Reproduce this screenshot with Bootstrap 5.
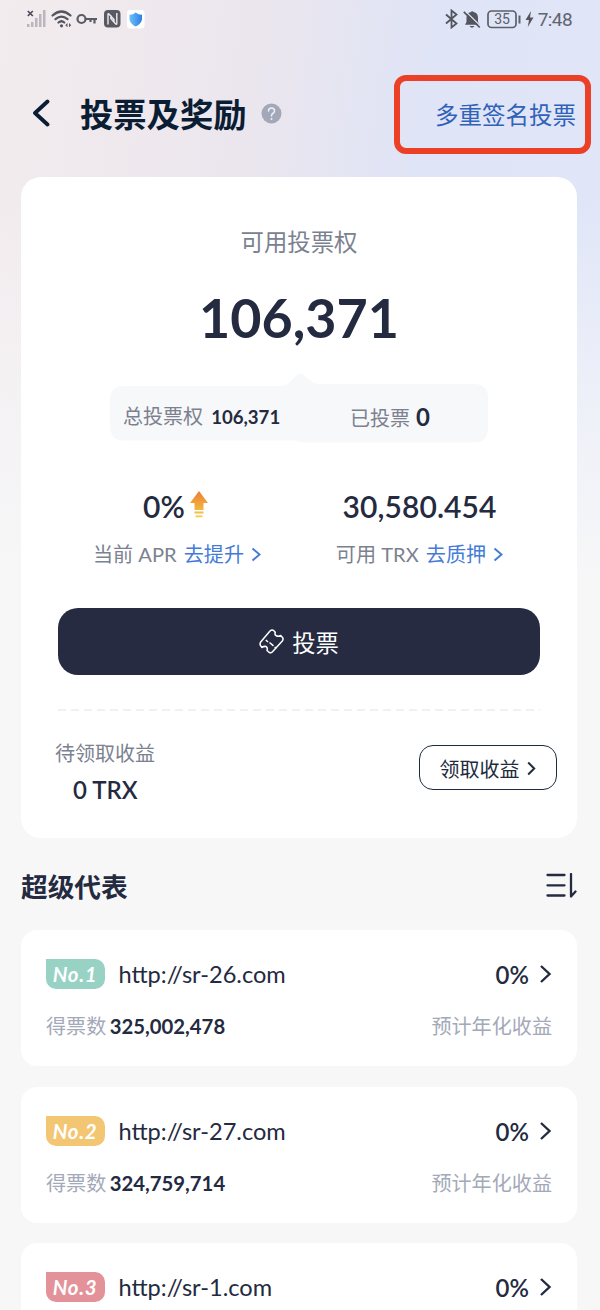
<!DOCTYPE html>
<html lang="zh-CN">
<head>
<meta charset="utf-8">
<meta name="viewport" content="width=device-width, initial-scale=1">
<title>投票及奖励</title>
<link href="https://cdn.jsdelivr.net/npm/bootstrap@5.3.0/dist/css/bootstrap.min.css" rel="stylesheet">
<style>
:root { --ink:#242a40; --muted:#7b8190; --pale:#a3a9b8; --blue:#447bd9; }
body { font-family:Lato,"Noto Sans CJK SC",sans-serif; color:var(--ink); background:#f7f7f8; height:1310px; overflow:hidden; }
.screen { height:1310px; overflow:hidden; padding:0 23px 0 21px;
  background:
    linear-gradient(180deg, rgba(247,247,248,0) 0, rgba(247,247,248,0) 200px, rgba(247,247,248,.55) 380px, #f7f7f8 580px),
    linear-gradient(98deg, #f3ecee 0, #ebe6ee 34%, #dfe4f6 56%, #e1e7fa 100%); }
svg { display:block; flex:none; }
.status { height:38px; margin:0 -23px 0 -21px; padding:0 28px 0 27px; color:#5d5d68; }
.clock { font:19px/38px Roboto,sans-serif; letter-spacing:-.6px; font-weight:400; color:#62646e; padding-top:1px; }
.topbar { height:139px; margin-right:-14px; padding:36.5px 0 0 11px; }
.title { font-size:33.3px; line-height:40px; font-weight:700; color:#0b1d33; margin:2px 0 0 30px; }
.multisig { width:197px; height:79px; border:6px solid #eb4026; border-radius:12px; color:#2f62b8; font-size:23.5px; line-height:69px; padding-right:9px; }
.panel { border:0; border-radius:20px; background:#fff; }
.wallet { height:661px; padding:47px 37px 0; }
.caption { font-size:23.4px; line-height:37px; height:36px; color:var(--muted); }
.power { font-size:53.8px; line-height:70px; font-weight:700; margin-top:22px; }
.split { height:70px; margin:21px 52px 0; padding-top:11px; }
.split svg { position:absolute; left:0; top:0; }
.split > div { position:relative; font-size:20px; line-height:65px; color:var(--muted); }
.split b { color:var(--ink); font-size:18.6px; }
.split .cast { font-size:24px; margin-left:1px; }
.figure-line { font-size:30px; line-height:40px; font-weight:600; height:40px; letter-spacing:.1px; }
.hint { font-size:20.1px; line-height:34px; height:32px; color:var(--muted); margin-top:12px; }
.hint a { color:var(--blue); text-decoration:none; margin-left:2px; }
.vote { height:67px; border-radius:20px; background:#262b41; color:#fff; font-size:23.3px; margin-top:38px; padding:0; border:0; }
.vote:hover { background:#262b41; color:#fff; }
.vote span { padding-top:3px; }
.dash { height:2px; margin-top:34px; background:repeating-linear-gradient(90deg,#f1f1f3 0 8px,transparent 8px 13px); }
.claim { margin:26px -17px 0 -3px; }
.claim-label { font-size:20px; line-height:32px; color:var(--muted); }
.claim-sum { font-size:24px; line-height:32px; font-weight:600; margin-top:5px; padding-left:18px; }
.claim-btn { width:138px; height:45px; margin-top:8px; border:1.3px solid #1d2b40; border-radius:14px; color:#222a3d; font-size:20px; padding:2px 1px 0 0; }
.section { height:92px; padding-top:4px; }
.section h2 { font-size:26.7px; font-weight:700; margin:2px 0 0; }
.rep { height:136px; margin-bottom:20.5px; padding:26px 25px 0; border-radius:16px; }
.rank { width:59px; height:30px; border-radius:0 10px 10px 10px; color:#fff; font-size:20.5px; letter-spacing:.6px; font-style:italic; font-weight:700; line-height:31px; text-align:center; padding-right:1px; }
.site { font-size:23.6px; line-height:37px; height:36px; margin-left:13.5px; }
.rate { font-size:24px; line-height:37px; height:36px; font-weight:600; margin-right:10px; }
.votes { font-size:20.1px; line-height:30px; margin-top:19px; color:var(--pale); }
.votes b { color:var(--ink); margin-left:3.5px; font-size:20.3px; }
.no1 { background:#98d2c4; } .no2 { background:#f3c673; } .no3 { background:#e49299; }
</style>
</head>
<body>
<div class="screen">
  <div class="status d-flex align-items-center justify-content-between">
    <div class="d-flex align-items-center">
      <svg width="19" height="18" viewBox="0 0 19 18"><g fill="#b9b6bd"><rect x="0" y="14" width="2.5" height="3"/><rect x="4" y="12" width="2.5" height="5"/><rect x="8" y="8" width="2.5" height="9"/><rect x="12" y="4" width="2.5" height="13"/><rect x="16" y="0" width="2.5" height="17"/></g><path d="M.8 1l5 5M5.8 1l-5 5" stroke="#4d4d57" stroke-width="1.7"/></svg>
      <svg style="margin-left:5px" width="22" height="18" viewBox="0 0 22 18" fill="none" stroke="#55555f" stroke-width="2.2" stroke-linecap="round"><path d="M1.5 5.5Q10.5-2.5 19.5 5.5M4.500 9.200Q10.500 4 16.500 9.200M7.500 12.500Q10.500 10 13.300 12.500"/><circle cx="10.500" cy="15.800" r="1.600" fill="#55555f" stroke="none"/><path d="M16.500 13l-2.200 2.200 2.200 2zM18 13l2.200 2.200-2.200 2z" fill="#55555f" stroke="none"/></svg>
      <svg style="margin-left:3px" width="22" height="14" viewBox="0 0 22 14" fill="none" stroke="#5b5b65" stroke-width="2.200"><circle cx="5.500" cy="7" r="4"/><path d="M9.500 7H21M18.500 7v4.500M14.500 7v3"/></svg>
      <svg style="margin-left:6px" width="17" height="18" viewBox="0 0 17 18"><rect width="16.500" height="17.500" rx="4" fill="#595962"/><path d="M4 14.500V4.500Q4 3 5.200 4.200L10 9.500V13M12.800 3V13.500Q12.800 15 11.500 13.800L6.800 8.500V5" fill="none" stroke="#eeeaf2" stroke-width="1.400"/></svg>
      <svg style="margin-left:6px" width="18" height="19" viewBox="0 0 18 19"><defs><linearGradient id="sh"><stop stop-color="#6dc0f5"/><stop offset="1" stop-color="#2c7fe8"/></linearGradient></defs><rect width="17.500" height="18.500" rx="3" fill="#fff"/><path d="M8.700 2.500Q11.500 4.800 15 4.700V9.500Q14 14 8.700 16.500Q3.500 14 2.500 9.500V4.700Q6 4.800 8.700 2.500Z" fill="url(#sh)"/></svg>
    </div>
    <div class="d-flex align-items-center">
      <svg width="13" height="20" viewBox="0 0 13 20" fill="none" stroke="#53555f" stroke-width="1.800"><path d="M1 5.500l10.500 9L6.500 18.500V1.500L11.500 5.500 1 14.500"/></svg>
      <svg style="margin-left:5px" width="18" height="19" viewBox="0 0 18 19"><path d="M2 14.800L3.500 12V8Q3.500 3 7.500 2.300Q9.200 0 11 2.300Q15 3 15 8V12l1.800 2.800ZM6.500 16h5q-2.500 3.500-5 0Z" fill="#53555f"/><path d="M1.800 .6L17.800 16.300" stroke="#e2e6f8" stroke-width="1.300"/><path d="M.8 1.800L16.800 17.500" stroke="#53555f" stroke-width="1.700"/></svg>
      <svg style="margin-left:6px" width="34" height="19" viewBox="0 0 34 19"><rect x="1" y="1" width="28" height="16.500" rx="3.500" fill="none" stroke="#5d606b" stroke-width="1.700"/><path d="M32.500 5.500v8" stroke="#5d606b" stroke-width="2"/><text x="15" y="14.300" font-family="Roboto" font-size="14" text-anchor="middle" fill="#5b5e69">35</text></svg>
      <svg style="margin-left:4px" width="9" height="16" viewBox="0 0 9 16"><path d="M6 0L.5 9H4L2.800 16 8.500 6.500H5Z" fill="#53555f"/></svg>
      <span class="clock" style="margin-left:4px">7:48</span>
    </div>
  </div>

  <header class="topbar d-flex justify-content-between align-items-start">
    <div class="d-flex align-items-center" style="height:77px">
      <svg width="18" height="28" viewBox="0 0 18 28"><path d="M15.500 2.500L3 14l12.500 11.500" fill="none" stroke="#0b1d33" stroke-width="3.800" stroke-linecap="round" stroke-linejoin="round"/></svg>
      <h1 class="title">投票及奖励</h1>
      <svg style="margin-left:15px" width="21" height="21" viewBox="0 0 21 21"><circle cx="10.500" cy="10.500" r="10" fill="#a3a8b8"/><path d="M7.500 8Q7.500 5 10.500 5T13.500 8Q13.500 9.500 11.700 10.500Q10.500 11.200 10.500 13" fill="none" stroke="#eef0f8" stroke-width="1.500" stroke-linecap="round"/><circle cx="10.500" cy="16" r="1" fill="#eef0f8"/></svg>
    </div>
    <div class="multisig text-end text-nowrap">多重签名投票</div>
  </header>

  <section class="wallet panel card">
    <div class="caption text-center">可用投票权</div>
    <div class="power text-center">106,371</div>
    <div class="split position-relative d-flex">
      <svg width="378" height="70" viewBox="0 0 378 70"><path d="M14 13H171Q176 13 179 10L187 2Q190.500 -1 194 2L202 9Q205 11 210 11H364Q378 11 378 25V55Q378 69.500 364 69.500H199Q188 69.500 186 67.500H14Q0 67.500 0 53V27Q0 13 14 13Z" fill="#f7f8f9"/></svg>
      <div class="w-50 text-nowrap" style="padding-left:13px">总投票权 <b style="margin-left:3px">106,371</b></div>
      <div class="w-50 text-center text-nowrap" style="padding-right:7px">已投票 <b class="cast">0</b></div>
    </div>
    <div class="d-flex" style="margin-top:43px">
      <div style="width:241px;padding-right:6px">
        <div class="figure-line d-flex justify-content-center align-items-center">0%<svg style="margin:-3px 0 0 5px" width="18" height="27" viewBox="0 0 18 27"><defs><linearGradient id="up" x2="0" y2="27" gradientUnits="userSpaceOnUse" x1="0" y1="0"><stop stop-color="#ed7d35"/><stop offset="1" stop-color="#f5cf45"/></linearGradient></defs><path d="M9 0L18 12H13.500V19H4.500V12H0ZM4.500 20.500h9v2h-9zM5.500 24.500h7v1.700h-7z" fill="url(#up)"/></svg></div>
      </div>
      <div style="width:241px"><div class="figure-line text-center">30,580.454</div></div>
    </div>
    <div class="d-flex hint text-nowrap">
      <div class="d-flex align-items-center justify-content-center" style="width:241px;padding-right:3px">当前 APR&nbsp;<a href="#">去提升</a><svg style="margin-left:7px" width="10" height="15" viewBox="0 0 10 15"><path d="M1.500 1.500l7 6-7 6" fill="none" stroke="#447bd9" stroke-width="2"/></svg></div>
      <div class="d-flex align-items-center justify-content-center" style="width:241px">可用 TRX&nbsp;<a href="#">去质押</a><svg style="margin-left:7px" width="10" height="15" viewBox="0 0 10 15"><path d="M1.500 1.500l7 6-7 6" fill="none" stroke="#447bd9" stroke-width="2"/></svg></div>
    </div>
    <button class="vote btn d-flex align-items-center justify-content-center" type="button">
      <svg style="margin-right:8px" width="25" height="25" viewBox="0 0 25 25" fill="none" stroke="#fff" stroke-width="1.500" stroke-linejoin="round"><path d="M11 2Q13 .3 14.800 1.700L16.300 3.200Q15.300 6 17.300 6.800Q19.500 7.800 21.700 6.500L23.500 8.500Q24.700 10 23.300 12L13.500 22.800Q12 24.300 10.300 23.500L8 21.500Q9 18.500 7 17.500Q5 17 3 18.500L1.500 16.500Q.5 15 1.700 13Z"/><path d="M6.800 11l2.200 2M10.500 13.500l4 3.300M15.700 18l1.600 1.400"/></svg><span>投票</span></button>
    <div class="dash"></div>
    <div class="claim d-flex justify-content-between align-items-start">
      <div><div class="claim-label">待领取收益</div><div class="claim-sum">0 TRX</div></div>
      <button class="claim-btn btn d-flex align-items-center justify-content-center" type="button">领取收益<svg style="margin-left:7px" width="9" height="15" viewBox="0 0 9 15"><path d="M1.200 1.500l6 6-6 6" fill="none" stroke="#222a3d" stroke-width="2"/></svg></button>
    </div>
  </section>

  <div class="section d-flex align-items-center justify-content-between">
    <h2>超级代表</h2>
    <svg width="31" height="26" viewBox="0 0 31 26" fill="none" stroke="#242a40" stroke-width="2.300" stroke-linecap="round" stroke-linejoin="round"><path d="M1.500 2h17M1.500 12.300h17M1.500 22.500h17M25 1v22.500l4.500-5"/></svg>
  </div>

  <article class="rep panel card">
    <div class="d-flex align-items-center"><span class="rank no1">No.1</span><span class="site">http://sr-26.com</span><span class="rate ms-auto">0%</span><svg width="13" height="20" viewBox="0 0 13 20"><path d="M2 2l8.500 8L2 18" fill="none" stroke="#242a40" stroke-width="2.400"/></svg></div>
    <div class="votes d-flex justify-content-between"><span>得票数<b>325,002,478</b></span><span>预计年化收益</span></div>
  </article>
  <article class="rep panel card">
    <div class="d-flex align-items-center"><span class="rank no2">No.2</span><span class="site">http://sr-27.com</span><span class="rate ms-auto">0%</span><svg width="13" height="20" viewBox="0 0 13 20"><path d="M2 2l8.500 8L2 18" fill="none" stroke="#242a40" stroke-width="2.400"/></svg></div>
    <div class="votes d-flex justify-content-between"><span>得票数<b>324,759,714</b></span><span>预计年化收益</span></div>
  </article>
  <article class="rep panel card">
    <div class="d-flex align-items-center"><span class="rank no3">No.3</span><span class="site">http://sr-1.com</span><span class="rate ms-auto">0%</span><svg width="13" height="20" viewBox="0 0 13 20"><path d="M2 2l8.500 8L2 18" fill="none" stroke="#242a40" stroke-width="2.400"/></svg></div>
  </article>
</div>
<script src="https://cdn.jsdelivr.net/npm/bootstrap@5.3.0/dist/js/bootstrap.bundle.min.js"></script>
</body>
</html>
